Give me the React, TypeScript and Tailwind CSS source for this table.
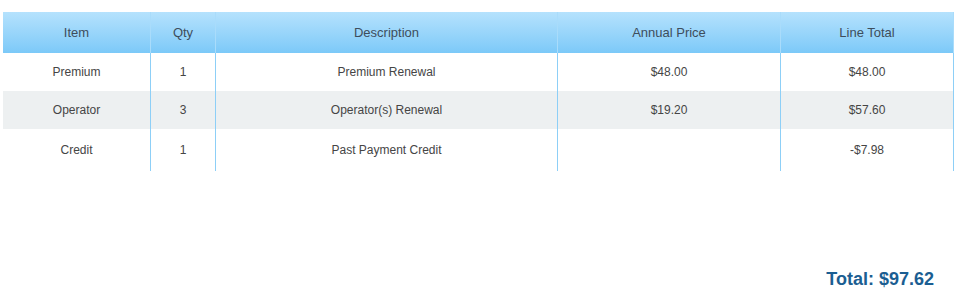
import React from "react";

const rows = [
  { item: "Premium", qty: "1", desc: "Premium Renewal", price: "$48.00", total: "$48.00", bg: "bg-white", h: "h-[38px]" },
  { item: "Operator", qty: "3", desc: "Operator(s) Renewal", price: "$19.20", total: "$57.60", bg: "bg-[#edf0f1]", h: "h-[38px]" },
  { item: "Credit", qty: "1", desc: "Past Payment Credit", price: "", total: "-$7.98", bg: "bg-white", h: "h-[42px]" },
];

export default function App() {
  return (
    <div className="w-[958px] h-[299px] bg-white" style={{ fontFamily: '"Liberation Sans", Arial, sans-serif' }}>
      <div className="pt-[12px] pl-[3px]">
        <div className="w-[951px]">
          <div className="flex h-[41px] bg-gradient-to-b from-[#b5e2fd] to-[#7cc9f8] text-[13px] text-[#3e4d5c]">
            <div className="w-[147px] flex items-center justify-center">Item</div>
            <div className="w-[65px] flex items-center justify-center border-l border-[#a9dcfb]">Qty</div>
            <div className="w-[342px] flex items-center justify-center border-l border-[#a9dcfb]">Description</div>
            <div className="w-[223px] flex items-center justify-center border-l border-[#a9dcfb]">Annual Price</div>
            <div className="w-[174px] flex items-center justify-center border-l border-r border-[#a9dcfb]">Line Total</div>
          </div>
          {rows.map((r) => (
            <div key={r.item} className={`flex ${r.h} ${r.bg} text-[12px] text-[#454545]`}>
              <div className="w-[147px] flex items-center justify-center">{r.item}</div>
              <div className="w-[65px] flex items-center justify-center border-l border-[#8dcff7]">{r.qty}</div>
              <div className="w-[342px] flex items-center justify-center border-l border-[#8dcff7]">{r.desc}</div>
              <div className="w-[223px] flex items-center justify-center border-l border-[#8dcff7]">{r.price}</div>
              <div className="w-[174px] flex items-center justify-center border-l border-r border-[#8dcff7]">{r.total}</div>
            </div>
          ))}
        </div>
      </div>
      <div className="flex justify-end pr-[24px] mt-[98px]">
        <div className="text-[18px] leading-[21px] font-bold text-[#1b5e92]">Total: $97.62</div>
      </div>
    </div>
  );
}
